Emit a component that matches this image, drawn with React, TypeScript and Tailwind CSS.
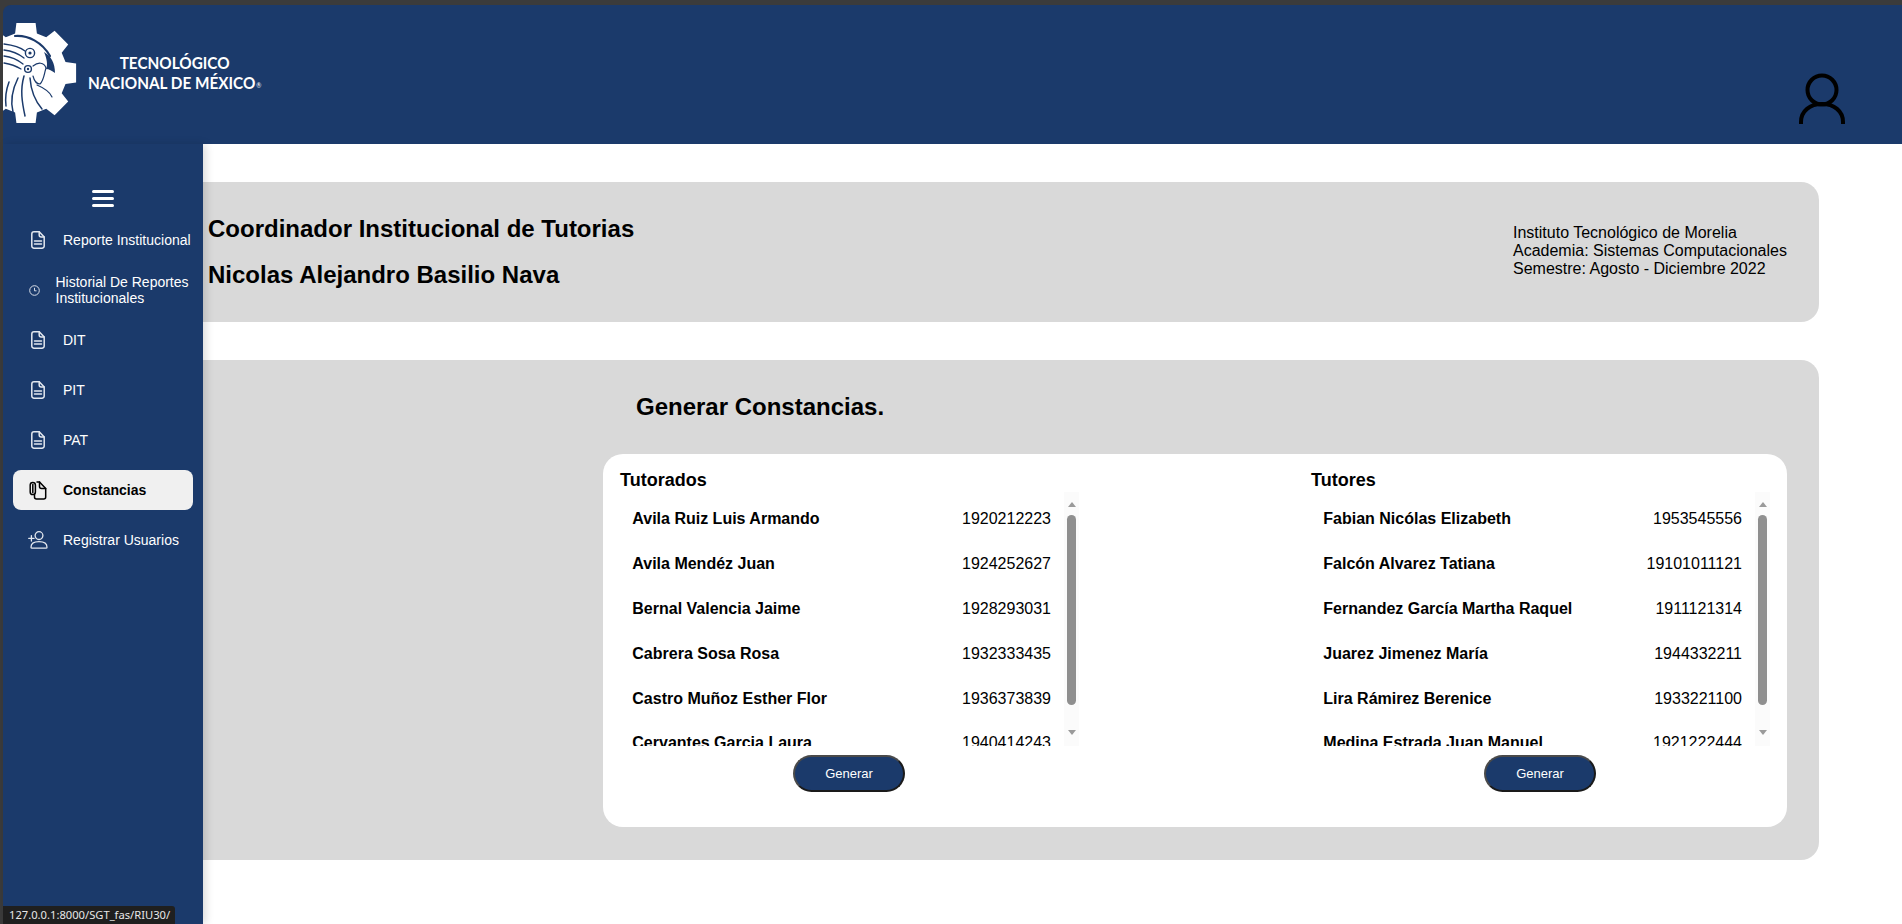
const tutorados: [string, string][] = [
  ["Avila Ruiz Luis Armando", "1920212223"],
  ["Avila Mendéz Juan", "1924252627"],
  ["Bernal Valencia Jaime", "1928293031"],
  ["Cabrera Sosa Rosa", "1932333435"],
  ["Castro Muñoz Esther Flor", "1936373839"],
  ["Cervantes Garcia Laura", "1940414243"],
];
const tutores: [string, string][] = [
  ["Fabian Nicólas Elizabeth", "1953545556"],
  ["Falcón Alvarez Tatiana", "19101011121"],
  ["Fernandez García Martha Raquel", "1911121314"],
  ["Juarez Jimenez María", "1944332211"],
  ["Lira Rámirez Berenice", "1933221100"],
  ["Medina Estrada Juan Manuel", "1921222444"],
];

function gearPath() {
  const cx = 26, cy = 73, ro = 51, ri = 41;
  let d = "";
  for (let i = 0; i < 8; i++) {
    const a = (i * Math.PI) / 4;
    const pts = [
      [ri, a - 0.27],
      [ro, a - 0.19],
      [ro, a + 0.19],
      [ri, a + 0.27],
    ];
    for (const [r, t] of pts) {
      d += `${d ? "L" : "M"}${(cx + r * Math.cos(t)).toFixed(1)} ${(cy + r * Math.sin(t)).toFixed(1)}`;
    }
  }
  return d + "Z";
}

function Logo() {
  return (
    <svg viewBox="3 22 76 102" className="w-[76px] h-[102px] mt-[17px] shrink-0">
      <path d={gearPath()} fill="#fff" />
      <g fill="none" stroke="#1b3a6b" strokeLinecap="round">
        <path d="M15 36 C28 35 42 42 50 56" strokeWidth="2.2" />
        <path d="M4 44 C12 45 20 47 25 51M4 50 C12 51 19 54 24 58M4 56 C12 57 18 60 23 64M4 63 C10 64 16 66 21 69" strokeWidth="1.3" />
        <circle cx="30" cy="53" r="4.6" strokeWidth="1.4" />
        <circle cx="28" cy="69" r="3.4" strokeWidth="1.4" />
        <path d="M33 66 C38 62 44 62 46 68 C44 74 44 80 40 84 C36 84 34 80 33 76" strokeWidth="1.2" />
        <path d="M24 76 C20 90 22 102 25 116M18 78 C12 90 10 100 13 112M30 78 C31 92 36 102 42 109M9 82 C6 90 5 98 6 106" strokeWidth="1.5" />
        <path d="M37 85 C44 88 50 92 52 97" strokeWidth="1.2" />
      </g>
      <path d="M44 52 C51 56 55 63 55 73 C52 71 49 69 46 69 C48 65 47 59 44 52Z" fill="#1b3a6b" />
      <circle cx="30" cy="53" r="1.6" fill="#1b3a6b" />
      <circle cx="28" cy="69" r="1.2" fill="#1b3a6b" />
    </svg>
  );
}

function DocIcon() {
  return (
    <svg viewBox="0 0 14 18" className="w-[14px] h-[18px]" fill="none" stroke="#e4e8ef" strokeWidth="1.5" strokeLinecap="round" strokeLinejoin="round">
      <path d="M3 .8h5.2L13.2 6v9A2.2 2.2 0 0 1 11 17.2H3A2.2 2.2 0 0 1 .8 15V3A2.2 2.2 0 0 1 3 .8z" />
      <path d="M8.2 .8V4a2 2 0 0 0 2 2h3" />
      <path d="M3.5 10h7M3.5 13h7" />
    </svg>
  );
}

function ClockIcon() {
  return (
    <svg viewBox="0 0 11 11" className="w-[11px] h-[11px]" fill="none" stroke="#d9dee8" strokeWidth="1">
      <circle cx="5.5" cy="5.5" r="4.8" />
      <path d="M5.5 2.8v3h2" />
    </svg>
  );
}

function ClipIcon() {
  return (
    <svg viewBox="0 0 18 19" className="w-[18px] h-[19px]" fill="none" stroke="#000" strokeWidth="1.5" strokeLinecap="round" strokeLinejoin="round">
      <path d="M8 1h2.5L16.7 7.5V16a2 2 0 0 1-2 2H7.5a2 2 0 0 1-2-2v-3" />
      <path d="M10.5 1v4.5a2 2 0 0 0 2 2h4.2" />
      <path d="M1.2 4a2.6 2.6 0 0 1 5.2 0v7a2.6 2.6 0 0 1-5.2 0V4z" />
      <path d="M3.8 3.5v8" />
    </svg>
  );
}

function AddUserIcon() {
  return (
    <svg viewBox="0 0 20 18" className="w-[20px] h-[18px]" fill="none" stroke="#e4e8ef" strokeWidth="1.3" strokeLinecap="round">
      <circle cx="11" cy="4.6" r="3.9" />
      <path d="M3 16.2c0-3.6 3.4-5.5 8-5.5s8 1.9 8 5.5c0 .6-.4 1-1 1H4c-.6 0-1-.4-1-1z" />
      <path d="M3.4 4.6v5.4M.7 7.3h5.4" />
    </svg>
  );
}

function NavItem({ icon, label, iconCol, active, twoLine }: { icon: React.ReactNode; label: React.ReactNode; iconCol: string; active?: boolean; twoLine?: boolean }) {
  return (
    <div className={`flex items-center h-10 w-[180px] mx-[10px] mb-[10px] rounded-lg text-sm ${active ? "bg-[#f0f0f0] text-black font-bold" : "text-white"} ${twoLine ? "leading-4" : ""}`}>
      <div className={`flex items-center shrink-0 ${iconCol}`}>{icon}</div>
      <div className="whitespace-nowrap">{label}</div>
    </div>
  );
}

function ListColumn({ title, rows }: { title: string; rows: [string, string][] }) {
  return (
    <div className="w-[459px] flex flex-col">
      <div className="h-[25px] pt-[1px] text-lg leading-[25px] font-bold text-black">{title}</div>
      <div className="flex h-[254px]">
        <div className="flex-1 overflow-hidden pt-[5px] pl-[12.3px] pr-[13px]">
          {rows.map(([n, c]) => (
            <div key={c} className="flex justify-between items-center h-[44.8px] text-base text-black">
              <span className="font-bold">{n}</span>
              <span>{c}</span>
            </div>
          ))}
        </div>
        <div className="w-[15px] bg-[#fbfbfb] flex flex-col items-center pt-[10px]">
          <div className="w-0 h-0 border-x-[4.5px] border-x-transparent border-b-[5px] border-b-[#9a9a9a]" />
          <div className="w-[9px] h-[190px] mt-[8px] rounded-full bg-[#8f8f8f]" />
          <div className="w-0 h-0 mt-[25px] border-x-[4.5px] border-x-transparent border-t-[5px] border-t-[#9a9a9a]" />
        </div>
      </div>
      <button className="self-center mt-[9px] mr-[1px] w-[112px] h-[37px] rounded-full bg-[#1b3a6b] border-2 border-[#1a1a1a] border-t-[#4a4a4a] border-l-[#4a4a4a] text-white text-[13px]">
        Generar
      </button>
    </div>
  );
}

export default function App() {
  return (
    <div className="w-[1902px] h-[924px] overflow-hidden bg-[#3b3b3b] pt-[5px] pl-[3px] relative font-['Liberation_Sans',Arial,sans-serif]">
      <header className="h-[139px] bg-[#1b3a6b] rounded-tl-lg flex justify-between">
        <div className="flex items-start">
          <Logo />
          <div className="ml-[9px] mt-[48px] flex flex-col items-center origin-left scale-x-[0.875] text-white font-['Lato',sans-serif] font-bold text-[17.5px] leading-[20px]">
            <span>TECNOLÓGICO</span>
            <span className="whitespace-nowrap">NACIONAL DE MÉXICO<span className="text-[7px] align-middle font-normal ml-[1px]">®</span></span>
          </div>
        </div>
        <svg viewBox="0 0 48 52" className="w-12 h-[52px] self-end mb-5 mr-[56px]" fill="none" stroke="#000" strokeWidth="4">
          <circle cx="24" cy="18" r="14.5" />
          <path d="M3 52v-2c0-11 9-18 21-18s21 7 21 18v2" />
        </svg>
      </header>
      <div className="flex h-[780px]">
        <aside className="w-[200px] shrink-0 bg-[#1b3a6b] relative z-10 shadow-[3px_0_8px_rgba(0,0,0,0.14)]">
          <div className="flex flex-col gap-[4px] items-center pt-[46px] mb-[13px]">
            <div className="w-[22px] h-[3px] bg-white rounded-sm" />
            <div className="w-[22px] h-[3px] bg-white rounded-sm" />
            <div className="w-[22px] h-[3px] bg-white rounded-sm" />
          </div>
          <NavItem icon={<DocIcon />} label="Reporte Institucional" iconCol="w-[50px] pl-[18px]" />
          <NavItem icon={<ClockIcon />} twoLine label={<>Historial De Reportes<br />Institucionales</>} iconCol="w-[42.5px] pl-[16px]" />
          <NavItem icon={<DocIcon />} label="DIT" iconCol="w-[50px] pl-[18px]" />
          <NavItem icon={<DocIcon />} label="PIT" iconCol="w-[50px] pl-[18px]" />
          <NavItem icon={<DocIcon />} label="PAT" iconCol="w-[50px] pl-[18px]" />
          <NavItem icon={<ClipIcon />} active label="Constancias" iconCol="w-[50px] pl-[16px]" />
          <NavItem icon={<AddUserIcon />} label="Registrar Usuarios" iconCol="w-[50px] pl-[15px]" />
        </aside>
        <main className="flex-1 bg-white pt-[38px] pr-[83px]">
          <section className="h-[140px] bg-[#d9d9d9] rounded-r-[18px] flex justify-between text-black">
            <div className="pl-[5px] pt-[33px]">
              <div className="text-2xl font-bold leading-7">Coordinador Institucional de Tutorias</div>
              <div className="text-2xl font-bold leading-7 mt-[18px]">Nicolas Alejandro Basilio Nava</div>
            </div>
            <div className="w-[306px] pt-[42px] text-base leading-[18px]">
              <div>Instituto Tecnológico de Morelia</div>
              <div>Academia: Sistemas Computacionales</div>
              <div>Semestre: Agosto - Diciembre 2022</div>
            </div>
          </section>
          <section className="h-[500px] mt-[38px] bg-[#d9d9d9] rounded-r-[18px] pl-[400px] pr-[32px]">
            <div className="h-[94px] pt-[33px] pl-[33px] text-2xl font-bold leading-7 text-black">Generar Constancias.</div>
            <div className="h-[373px] bg-white rounded-[20px] px-[17px] pt-[13px] flex justify-between">
              <ListColumn title="Tutorados" rows={tutorados} />
              <ListColumn title="Tutores" rows={tutores} />
            </div>
          </section>
        </main>
      </div>
      <div className="absolute z-20 left-[3px] bottom-0 h-[18px] w-[172px] bg-[#1f1f1f] rounded-tr-[3px] text-[#e8e8e8] text-[11.2px] leading-[18px] pl-[6px] font-['Noto_Sans',sans-serif] whitespace-nowrap">
        127.0.0.1:8000/SGT_fas/RIU30/
      </div>
    </div>
  );
}
